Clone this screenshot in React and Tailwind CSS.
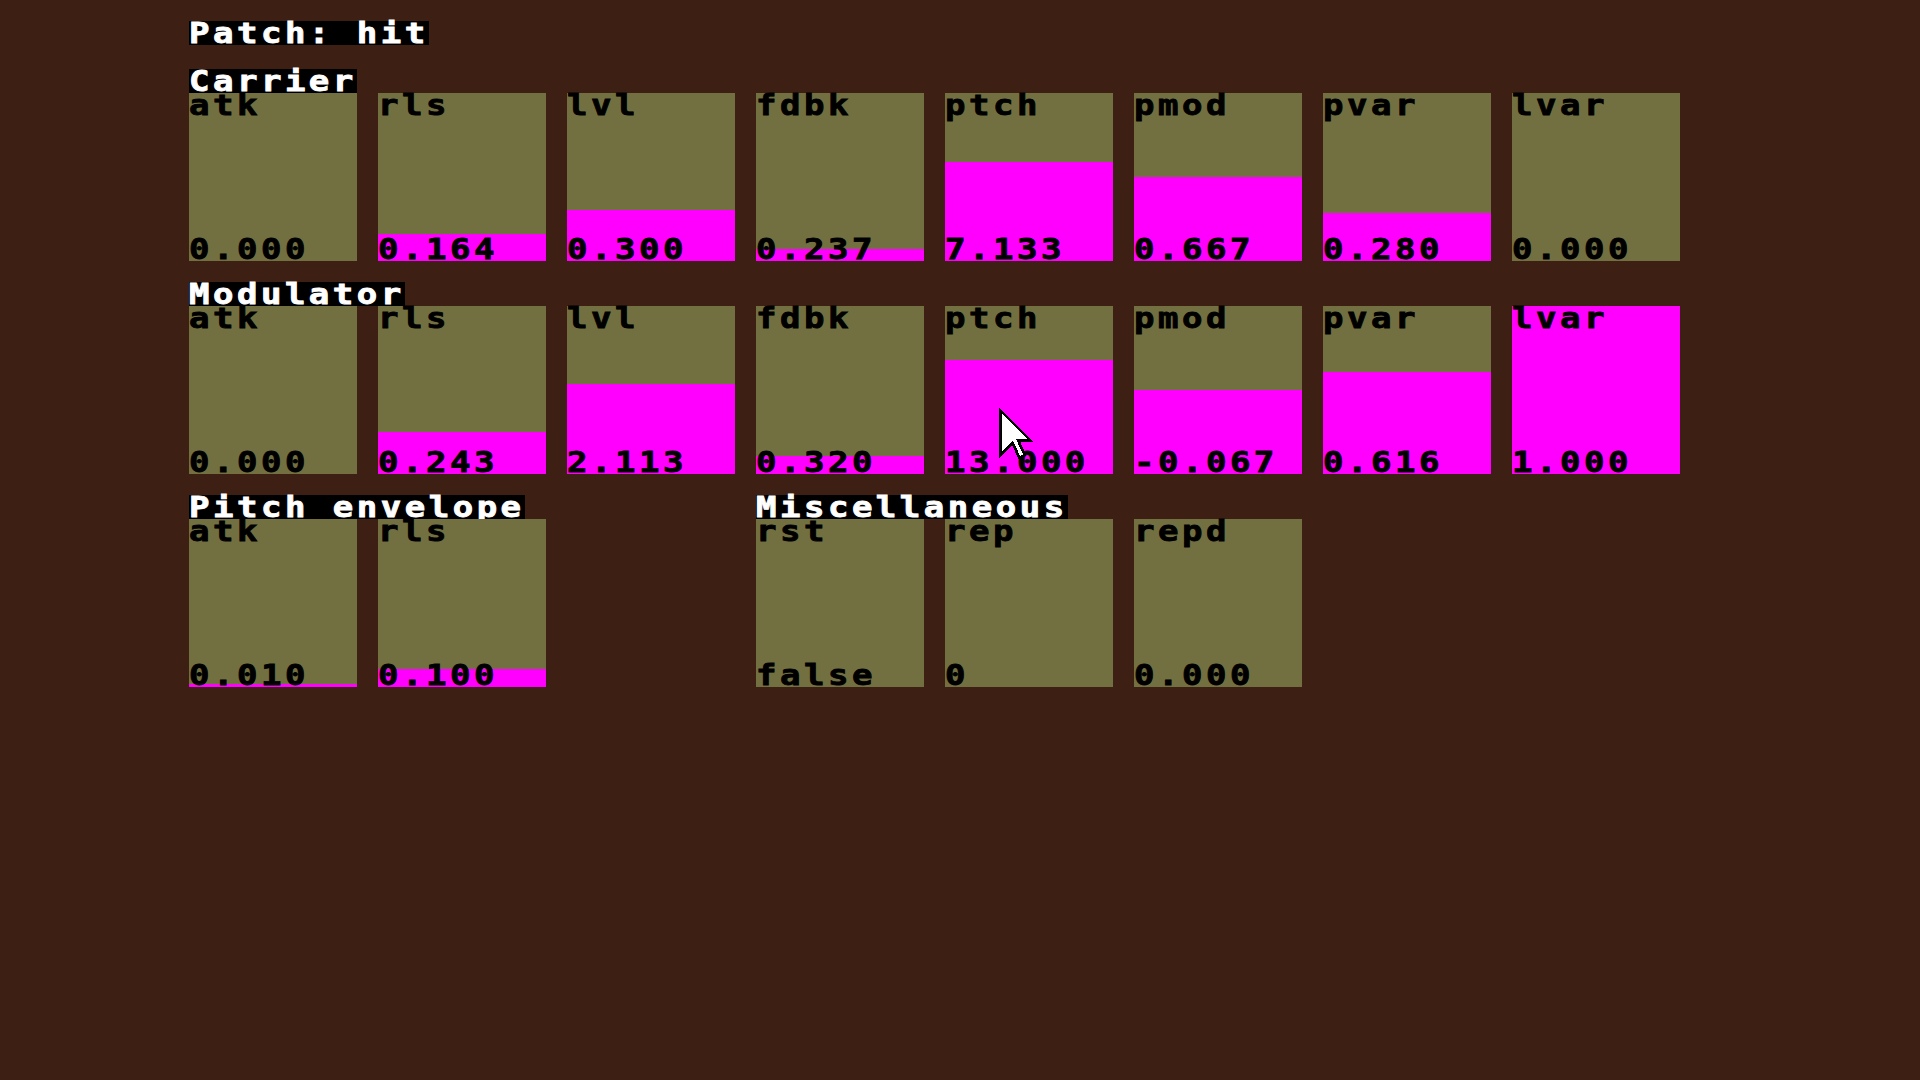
import React from 'react';

// fill = height of the magenta bar in px (tile is 168px)
const carrier = [
  { name: 'atk', value: '0.000', fill: 0 },
  { name: 'rls', value: '0.164', fill: 27 },
  { name: 'lvl', value: '0.300', fill: 51 },
  { name: 'fdbk', value: '0.237', fill: 12 },
  { name: 'ptch', value: '7.133', fill: 99 },
  { name: 'pmod', value: '0.667', fill: 84 },
  { name: 'pvar', value: '0.280', fill: 48 },
  { name: 'lvar', value: '0.000', fill: 0 },
];

const modulator = [
  { name: 'atk', value: '0.000', fill: 0 },
  { name: 'rls', value: '0.243', fill: 42 },
  { name: 'lvl', value: '2.113', fill: 90 },
  { name: 'fdbk', value: '0.320', fill: 18 },
  { name: 'ptch', value: '13.000', fill: 114 },
  { name: 'pmod', value: '-0.067', fill: 84 },
  { name: 'pvar', value: '0.616', fill: 102 },
  { name: 'lvar', value: '1.000', fill: 168 },
];

const pitchEnv = [
  { name: 'atk', value: '0.010', fill: 3 },
  { name: 'rls', value: '0.100', fill: 18 },
];

const misc = [
  { name: 'rst', value: 'false', fill: 0 },
  { name: 'rep', value: '0', fill: 0 },
  { name: 'repd', value: '0.000', fill: 0 },
];

const Label = ({ children }) => (
  <div className="inline-block h-6 bg-black text-white whitespace-nowrap">
    <span className="block h-6 scale-y-[0.82]">{children}</span>
  </div>
);

const Tile = ({ name, value, fill }) => (
  <div className="relative w-[168px] h-[168px] bg-[#727041] text-black">
    <div className="absolute inset-x-0 bottom-0 bg-[#ff00ff]" style={{ height: fill }} />
    <div className="relative flex h-full flex-col justify-between whitespace-nowrap">
      <span className="block h-6 scale-y-[0.82]">{name}</span>
      <span className="block h-6 scale-y-[0.82]">{value}</span>
    </div>
  </div>
);

const Section = ({ title, params, className = '' }) => (
  <div className={`flex flex-col ${className}`}>
    <div>
      <Label>{title}</Label>
    </div>
    <div className="flex gap-[21px]">
      {params.map((p) => (
        <Tile key={p.name} {...p} />
      ))}
    </div>
  </div>
);

const Cursor = () => (
  <svg
    className="absolute left-[999px] top-[408px]"
    width="34"
    height="55"
    viewBox="0 0 12.5 19.5"
    shapeRendering="crispEdges"
  >
    <polygon
      points="0.5,0.5 11.5,11.5 7,11.5 9.5,17 7.5,18 5,12.5 0.5,17"
      fill="#ffffff"
      stroke="#000000"
      strokeWidth="1"
    />
  </svg>
);

export default function App() {
  return (
    <div className="relative min-h-screen w-full bg-[#3d1f13] pl-[189px] pt-[21px] font-['DejaVu_Sans_Mono',monospace] text-[34px] font-bold leading-6 tracking-[3.5px] [-webkit-text-stroke:1px_currentColor]">
      <div className="mb-6">
        <Label>Patch: hit</Label>
      </div>

      <div className="flex flex-col gap-[21px]">
        <Section title="Carrier" params={carrier} />
        <Section title="Modulator" params={modulator} />
        <div className="flex gap-[21px]">
          <Section title="Pitch envelope" params={pitchEnv} className="w-[546px]" />
          <Section title="Miscellaneous" params={misc} />
        </div>
      </div>

      <Cursor />
    </div>
  );
}
